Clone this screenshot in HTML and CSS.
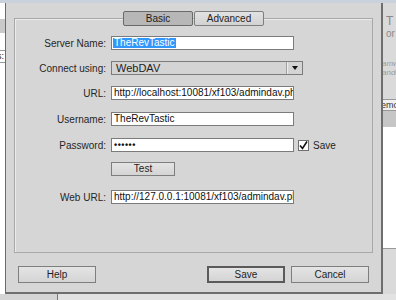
FILE: index.html
```html
<!DOCTYPE html>
<html lang="en">
<head>
    <meta charset="UTF-8">
    <title>Server Setup</title>
    <link rel="stylesheet" href="styles.css">
</head>
<body>
    <div class="desktop">
        <div class="topstrip"></div>

        <div class="behind-left">
            <div class="bl-bar"></div>
            <div class="bl-field">gs:</div>
        </div>

        <div class="behind-right">
            <div class="br-title">T</div>
            <div class="br-line">or</div>
            <div class="br-note">amw<br>ando</div>
            <div class="br-tab">emo</div>
            <div class="br-band"></div>
            <div class="br-white"></div>
        </div>

        <div class="behind-bottom"></div>

        <div class="dialog">
            <div class="group">
                <div class="tabs">
                    <div class="tab active">Basic</div>
                    <div class="tab">Advanced</div>
                </div>

                <div class="form">
                    <div class="row first">
                        <label>Server Name:</label>
                        <div class="field"><span class="sel">TheRevTastic</span></div>
                    </div>
                    <div class="row">
                        <label>Connect using:</label>
                        <div class="select">
                            <span class="select-text">WebDAV</span>
                            <span class="select-arrow"></span>
                        </div>
                    </div>
                    <div class="row">
                        <label>URL:</label>
                        <div class="field">http://localhost:10081/xf103/admindav.php</div>
                    </div>
                    <div class="row gap12">
                        <label>Username:</label>
                        <div class="field">TheRevTastic</div>
                    </div>
                    <div class="row gap12">
                        <label>Password:</label>
                        <div class="field dots">••••••</div>
                        <span class="check">
                            <svg width="9" height="9" viewBox="0 0 9 9"><path d="M1 4.5 L3.5 7.5 L8 0.5" fill="none" stroke="#111" stroke-width="1.6"/></svg>
                        </span>
                        <span class="check-label">Save</span>
                    </div>
                    <div class="row gap10">
                        <label></label>
                        <div class="btn test">Test</div>
                    </div>
                    <div class="row gap14">
                        <label>Web URL:</label>
                        <div class="field">http://127.0.0.1:10081/xf103/admindav.php</div>
                    </div>
                </div>
            </div>

            <div class="actions">
                <div class="btn wide">Help</div>
                <div class="right-btns">
                    <div class="btn wide default">Save</div>
                    <div class="btn wide">Cancel</div>
                </div>
            </div>
        </div>
    </div>
</body>
</html>
```

FILE: styles.css
```css
body {
    margin: 0;
    font-family: "Liberation Sans", Arial, sans-serif;
    font-size: 10px;
    color: #1e1e1e;
}
.desktop {
    position: relative;
    width: 396px;
    height: 300px;
    overflow: hidden;
    background-color: #fff;
}
.topstrip {
    position: absolute;
    left: 0;
    top: 0;
    width: 396px;
    height: 3px;
    background-color: #c9d2dc;
}

/* windows behind the dialog */
.behind-left {
    position: absolute;
    left: 0;
    top: 3px;
    width: 5px;
    height: 291px;
    background-color: #fff;
}
.bl-bar {
    margin-top: 16px;
    height: 14px;
    background-color: #c9c9c9;
}
.bl-field {
    margin-top: 17px;
    height: 11px;
    border-top: 1px solid #999;
    border-bottom: 1px solid #999;
    line-height: 11px;
    font-size: 9px;
    text-indent: -8px;
    overflow: hidden;
}
.behind-right {
    position: absolute;
    left: 383px;
    top: 3px;
    width: 13px;
    height: 297px;
    background-color: #dadada;
    color: #8a8a8a;
    overflow: hidden;
}
.br-title {
    margin: 12px 0 0 3px;
    font-size: 12px;
    line-height: 13px;
}
.br-line {
    margin-left: 3px;
    font-size: 10px;
    line-height: 11px;
}
.br-note {
    margin: 20px 0 0 -1px;
    font-size: 8px;
    font-style: italic;
    line-height: 9px;
    color: #9a9a9a;
}
.br-tab {
    margin-top: 22px;
    height: 10px;
    border-top: 1px solid #999;
    border-bottom: 1px solid #999;
    background-color: #f0f0f0;
    color: #333;
    font-size: 9px;
    line-height: 10px;
    text-indent: -2px;
}
.br-band {
    height: 16px;
    background-color: #c6c6c6;
}
.br-white {
    height: 121px;
    background-color: #fff;
    border-bottom: 1px solid #999;
}
.behind-bottom {
    position: absolute;
    left: 0;
    top: 294px;
    width: 396px;
    height: 6px;
    background: linear-gradient(to right, #d4d4d4 0, #d4d4d4 57px, #777 57px, #777 58px, #e2e2e2 58px);
}

/* dialog */
.dialog {
    position: absolute;
    left: 5px;
    top: 3px;
    width: 378px;
    height: 291px;
    box-sizing: border-box;
    background-color: #d6d6d6;
    border-left: 1px solid #6a6a6a;
    border-right: 2px solid #6e6e6e;
    border-bottom: 2px solid #6e6e6e;
    padding: 15px 8px 0 8px;
}
.group {
    height: 235px;
    box-sizing: border-box;
    border: 1px solid #a8a8a8;
    box-shadow: inset 1px 1px 0 #ececec;
}
.tabs {
    display: flex;
    justify-content: center;
    margin-top: -8px;
}
.tab {
    width: 70px;
    height: 15px;
    box-sizing: border-box;
    border: 1px solid #7e7e7e;
    border-radius: 2px;
    background: linear-gradient(#e2e2e2, #d2d2d2);
    text-align: center;
    line-height: 13px;
    font-size: 10px;
}
.tab.active {
    background: #b7b7b7;
    border-color: #6a6a6a;
}
.tab + .tab {
    margin-left: 1px;
}

.form {
    padding-left: 0;
}
.row {
    display: flex;
    align-items: center;
    height: 14px;
    margin-top: 11px;
}
.row.first {
    margin-top: 10px;
}
.row.gap12 {
    margin-top: 12px;
}
.row.gap10 {
    margin-top: 10px;
}
.row.gap14 {
    margin-top: 14px;
}
.row label {
    width: 91px;
    text-align: right;
    margin-right: 5px;
    flex-shrink: 0;
    color: #262626;
}
.field {
    width: 183px;
    height: 14px;
    box-sizing: border-box;
    border: 1px solid #7b7b7b;
    background-color: #fff;
    padding: 0 2px;
    line-height: 12px;
    white-space: nowrap;
    overflow: hidden;
    color: #111;
}
.sel {
    display: inline-block;
    background-color: #3297fd;
    color: #fff;
    line-height: 10px;
    padding: 0 1px;
    margin-left: -1px;
}
.dots {
    font-weight: bold;
    font-size: 9px;
    letter-spacing: 0.5px;
}
.select {
    display: flex;
    width: 192px;
    height: 14px;
    box-sizing: border-box;
    border: 1px solid #7b7b7b;
    background-color: #d4d4d4;
}
.select-text {
    flex: 1;
    padding-left: 4px;
    line-height: 12px;
    font-size: 11px;
}
.select-arrow {
    width: 15px;
    border-left: 1px solid #a0a0a0;
    box-shadow: inset 1px 0 0 #ececec;
    display: flex;
    align-items: center;
    justify-content: center;
}
.select-arrow::after {
    content: "";
    border-left: 3px solid transparent;
    border-right: 3px solid transparent;
    border-top: 4px solid #111;
}
.check {
    display: flex;
    align-items: center;
    justify-content: center;
    width: 11px;
    height: 11px;
    box-sizing: border-box;
    margin-left: 4px;
    border: 1px solid #707070;
    background-color: #fff;
}
.check-label {
    margin-left: 4px;
    font-size: 10px;
}
.btn {
    height: 14px;
    box-sizing: border-box;
    border: 1px solid #7e7e7e;
    background: linear-gradient(#e4e4e4, #d4d4d4);
    text-align: center;
    line-height: 12px;
    font-size: 10px;
}
.btn.test {
    width: 64px;
}

.actions {
    display: flex;
    justify-content: space-between;
    margin: 13px 4px 0 4px;
}
.right-btns {
    display: flex;
    gap: 6px;
}
.btn.wide {
    width: 78px;
    height: 17px;
    line-height: 15px;
}
.btn.default {
    border: 2px solid #5a5a5a;
    line-height: 13px;
}
```
